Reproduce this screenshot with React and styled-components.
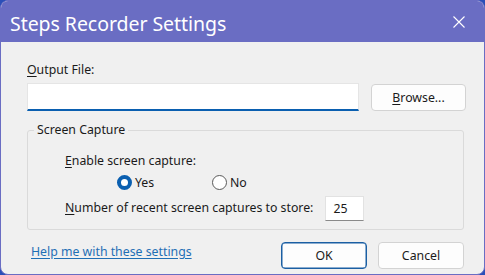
import React from "react";
import styled, { createGlobalStyle } from "styled-components";

const Global = createGlobalStyle`
  html, body { margin: 0; padding: 0; background: #2b4fb8; }
  body { width: 485px; height: 275px; overflow: hidden; }
  * { box-sizing: border-box; }
`;

const Window = styled.div`
  width: 485px;
  height: 275px;
  border: 1px solid #6a6dc3;
  border-radius: 8px;
  overflow: hidden;
  background: #f0f0f0;
  display: flex;
  flex-direction: column;
  font-family: "Noto Sans", "Open Sans", sans-serif;
  font-size: 12.3px;
  color: #1a1a1a;
`;

const TitleBar = styled.div`
  height: 41px;
  background: #6a6dc3;
  display: flex;
  align-items: center;
  justify-content: space-between;
  padding: 4px 19px 0 9px;
  color: #fff;
`;

const Title = styled.div`
  font-size: 19.5px;
  font-family: "Noto Sans", sans-serif;
  letter-spacing: -0.05px;
`;

const Close = styled.svg`
  width: 12px;
  height: 12px;
  margin-bottom: 4px;
`;

const Body = styled.div`
  flex: 1;
  padding: 20px 17px 0 26px;
  display: flex;
  flex-direction: column;
`;

const Label = styled.div`
  line-height: 16px;
  white-space: nowrap;
`;

const U = styled.span`
  text-decoration: underline;
  text-underline-offset: 2px;
`;

const FileRow = styled.div`
  display: flex;
  align-items: center;
  margin-top: 5px;
  gap: 12px;
`;

const TextInput = styled.div`
  flex: none;
  width: 332px;
  height: 28px;
  background: #fff;
  border: 1px solid #e5e5e5;
  border-bottom: 2px solid #0a5fb0;
`;

const Button = styled.div`
  flex: none;
  width: ${p => p.$w}px;
  height: ${p => p.$h}px;
  border-radius: 4px;
  background: #fdfdfd;
  border: 1px solid ${p => (p.$primary ? "#1b5fa3" : "#d3d3d3")};
  box-shadow: ${p => (p.$primary ? "inset 0 0 0 0.5px #1b5fa3" : "none")};
  display: flex;
  align-items: center;
  justify-content: center;
  color: #1a1a1a;
`;

const Group = styled.div`
  position: relative;
  margin-top: 19px;
  width: 437px;
  height: 100px;
  border: 1px solid #dadada;
  border-radius: 3px;
  padding: 22px 0 0 37px;
`;

const Legend = styled.div`
  position: absolute;
  top: -9px;
  left: 6px;
  padding: 0 3px;
  background: #f0f0f0;
  line-height: 16px;
`;

const RadioRow = styled.div`
  display: flex;
  align-items: center;
  margin: 5px 0 0 52px;
`;

const RadioItem = styled.div`
  display: flex;
  align-items: center;
  gap: 3px;
  width: ${p => p.$w}px;
`;

const Radio = styled.div`
  width: 15px;
  height: 15px;
  border-radius: 50%;
  border: ${p => (p.$on ? "4px solid #0a5fb0" : "1px solid #5a5a5a")};
  background: #fff;
`;

const CountRow = styled.div`
  display: flex;
  align-items: flex-start;
  margin-top: 5px;
  gap: 12px;
`;

const CountLabel = styled(Label)`
  margin-top: 4px;
`;

const SmallInput = styled.div`
  width: 39px;
  height: 25px;
  background: #fff;
  border: 1px solid #e2e2e2;
  border-bottom: 1px solid #8a8a8a;
  padding: 3px 0 0 7px;
`;

const Footer = styled.div`
  display: flex;
  align-items: center;
  margin-top: 12px;
`;

const Link = styled.a`
  color: #1f6fb5;
  text-decoration: underline;
  text-underline-offset: 2px;
  margin: 0 0 8px 4px;
  flex: 1;
`;

const Buttons = styled.div`
  display: flex;
  gap: 11px;
  margin-right: 3px;
`;

export default function App() {
  return (
    <>
      <Global />
      <Window>
        <TitleBar>
          <Title>Steps Recorder Settings</Title>
          <Close viewBox="0 0 12 12">
            <path d="M0.5 0.5 L11.5 11.5 M11.5 0.5 L0.5 11.5" stroke="#fff" strokeWidth="1.1" />
          </Close>
        </TitleBar>
        <Body>
          <Label>
            <U>O</U>utput File:
          </Label>
          <FileRow>
            <TextInput />
            <Button $w={95} $h={27}>
              <U>B</U>rowse...
            </Button>
          </FileRow>
          <Group>
            <Legend>Screen Capture</Legend>
            <Label>
              <U>E</U>nable screen capture:
            </Label>
            <RadioRow>
              <RadioItem $w={95}>
                <Radio $on />
                Yes
              </RadioItem>
              <RadioItem $w={60}>
                <Radio />
                No
              </RadioItem>
            </RadioRow>
            <CountRow>
              <CountLabel>
                <U>N</U>umber of recent screen captures to store:
              </CountLabel>
              <SmallInput>25</SmallInput>
            </CountRow>
          </Group>
          <Footer>
            <Link>Help me with these settings</Link>
            <Buttons>
              <Button $w={86} $h={27} $primary>OK</Button>
              <Button $w={86} $h={27}>Cancel</Button>
            </Buttons>
          </Footer>
        </Body>
      </Window>
    </>
  );
}
